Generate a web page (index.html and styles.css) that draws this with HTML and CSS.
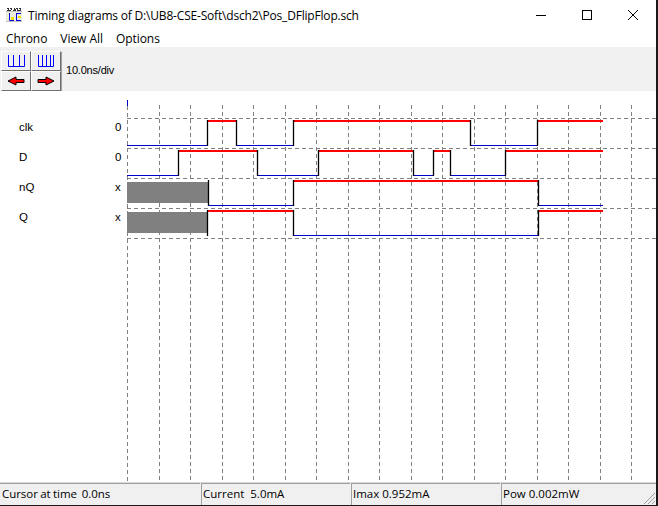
FILE: index.html
```html
<!DOCTYPE html>
<html lang="en">
<head>
    <meta charset="UTF-8">
    <title>Timing diagrams</title>
    <link rel="stylesheet" href="styles.css">
</head>
<body>
    <div class="window">
        <div class="title-bar">
            <svg class="app-icon" width="16" height="16" viewBox="0 0 16 16">
                <path d="M1 1.500h2M4 1.500h2M8 1.500h1M10 1.500h2M13 1.500h2M2 2.500h1M5 2.500h1M8 2.500h2M11 2.500h1M14 2.500h1M1 3.500h4M7 3.500h3M11 3.500h4" stroke="#333" fill="none"/>
                <rect x="0" y="4" width="16" height="11" fill="#ececd8"/>
                <path d="M0 4.500h16M0 14.500h16" stroke="#c0c0c0"/>
                <path d="M3.500 6v7.500H8M10 6.500h5M10 13.500h5M10.500 6v8" stroke="#0000e0" fill="none"/>
                <rect x="5" y="10" width="3" height="3" fill="#f0e000"/>
                <rect x="12" y="9" width="3" height="2" fill="#f0e000"/>
            </svg>
            <span class="title">Timing diagrams of D:\UB8-CSE-Soft\dsch2\Pos_DFlipFlop.sch</span>
            <div class="win-buttons">
                <svg width="12" height="12" viewBox="0 0 12 12"><path d="M1 6.500h10" stroke="#000"/></svg>
                <svg width="12" height="12" viewBox="0 0 12 12"><rect x="1.500" y="1.500" width="9" height="9" fill="none" stroke="#000"/></svg>
                <svg width="12" height="12" viewBox="0 0 12 12"><path d="M1 1l10 10M11 1L1 11" stroke="#000"/></svg>
            </div>
        </div>

        <div class="menu-bar">
            <span>Chrono</span>
            <span>View All</span>
            <span>Options</span>
        </div>

        <div class="tool-bar">
            <div class="tool-grid">
                <button class="tool-btn">
                    <svg width="18" height="14" viewBox="0 0 18 14"><path d="M1.500 1v11.500h16V1M6.500 1v11.500M12.500 1v11.500" stroke="#0000ff" fill="none"/></svg>
                </button>
                <button class="tool-btn">
                    <svg width="18" height="14" viewBox="0 0 18 14"><path d="M1.500 1v11.500h15V1M5.500 1v11.500M9.500 1v11.500M13.500 1v11.500" stroke="#0000ff" fill="none"/></svg>
                </button>
                <button class="tool-btn">
                    <svg width="18" height="12" viewBox="0 0 18 12"><path d="M1 6l8-4v2.500h8v3H9V10z" fill="#ff0000" stroke="#000"/></svg>
                </button>
                <button class="tool-btn">
                    <svg width="18" height="12" viewBox="0 0 18 12"><path d="M17 6L9 2v2.500H1v3h8V10z" fill="#ff0000" stroke="#000"/></svg>
                </button>
            </div>
            <span class="scale">10.0ns/div</span>
        </div>

        <div class="plot">
            <svg width="656" height="392" viewBox="0 91 656 392">
                <!-- grid -->
                <path class="grid" d="M127.500 106V481M159.500 105V481M190.500 105V481M222.500 105V481M253.500 105V481M285.500 105V481M316.500 105V481M348.500 105V481M379.500 105V481M411.500 105V481M442.500 105V481M474.500 105V481M505.500 105V481M537.500 105V481M568.500 105V481M600.500 105V481M631.500 105V481"/>
                <path class="grid" d="M127 118.500H656M127 148.500H656M127 178.500H656M127 208.500H656M127 238.500H656"/>
                <path class="low" d="M127.500 100V106"/>

                <!-- signal names and start values -->
                <text class="sig" x="19" y="131">clk</text>
                <text class="sig" x="19" y="161">D</text>
                <text class="sig" x="19" y="191">nQ</text>
                <text class="sig" x="19" y="221">Q</text>
                <text class="sig" x="115" y="131">0</text>
                <text class="sig" x="115" y="161">0</text>
                <text class="sig" x="115" y="191">x</text>
                <text class="sig" x="115" y="221">x</text>

                <!-- unknown state -->
                <rect class="unknown" x="127" y="182" width="81" height="21"/>
                <rect class="unknown" x="127" y="212" width="80" height="21"/>

                <!-- clk -->
                <path class="low" d="M127 145.500H207M236 145.500H293M470 145.500H537"/>
                <path class="high" d="M207 121H236M293 121H470M537 121H603"/>
                <path class="edge" d="M207.500 120V146M236.500 120V146M293.500 120V146M470.500 120V146M537.500 120V146"/>

                <!-- D -->
                <path class="low" d="M127 175.500H178M257 175.500H318M413 175.500H433M450 175.500H505"/>
                <path class="high" d="M178 151H257M318 151H413M433 151H450M505 151H603"/>
                <path class="edge" d="M178.500 150V176M257.500 150V176M318.500 150V176M413.500 150V176M433.500 150V176M450.500 150V176M505.500 150V176"/>

                <!-- nQ -->
                <path class="low" d="M208 205.500H293M538 205.500H603"/>
                <path class="high" d="M293 181H538"/>
                <path class="edge" d="M208.500 180V206M293.500 180V206M538.500 180V206"/>

                <!-- Q -->
                <path class="low" d="M294 235.500H538"/>
                <path class="high" d="M207 211H294M538 211H603"/>
                <path class="edge" d="M207.500 210V236M293.500 210V236M538.500 210V236"/>
            </svg>
        </div>

        <div class="status-bar">
            <div class="panel panel-cursor">Cursor at time&nbsp; 0.0ns</div>
            <div class="panel panel-current">Current&nbsp; 5.0mA</div>
            <div class="panel panel-imax">Imax 0.952mA</div>
            <div class="panel panel-pow">Pow 0.002mW</div>
            <svg class="grip" width="14" height="14" viewBox="0 0 14 14"><path d="M13 2L2 13M13 6L6 13M13 10l-3 3" stroke="#a0a0a0" fill="none"/></svg>
        </div>
    </div>
</body>
</html>
```

FILE: styles.css
```css
html, body {
    margin: 0;
    padding: 0;
    height: 100%;
    overflow: hidden;
    background-color: #fff;
}
.window {
    width: 656px;
    height: 505px;
    display: flex;
    flex-direction: column;
    border-right: 2px solid #1a1a1a;
    border-bottom: 1px solid #1a1a1a;
    font-family: "Open Sans", sans-serif;
    font-size: 12px;
    color: #000;
}
.title-bar {
    height: 30px;
    display: flex;
    align-items: center;
    padding-left: 6px;
    flex: none;
}
.app-icon {
    margin-right: 6px;
}
.title {
    letter-spacing: -0.19px;
}
.win-buttons {
    margin-left: auto;
    display: flex;
    gap: 34px;
    padding-right: 17px;
}
.menu-bar {
    height: 17px;
    display: flex;
    gap: 13px;
    padding-left: 6px;
    flex: none;
    line-height: 18px;
    letter-spacing: -0.05px;
}
.tool-bar {
    height: 44px;
    background-color: #f0f0f0;
    display: flex;
    align-items: center;
    flex: none;
}
.tool-grid {
    display: grid;
    grid-template-columns: 30px 30px;
    grid-template-rows: 20px 20px;
    margin-left: 1px;
    margin-top: 3px;
}
.tool-btn {
    padding: 0;
    background-color: #f0f0f0;
    border: 1px solid;
    border-color: #fff #707070 #707070 #fff;
    box-shadow: 1px 1px 0 #a0a0a0;
    display: flex;
    align-items: center;
    justify-content: center;
}
.scale {
    font-family: "Liberation Sans", Arial, sans-serif;
    font-size: 11px;
    letter-spacing: -0.2px;
    margin-left: 5px;
    margin-top: 2px;
}
.plot {
    flex: 1;
    background-color: #fff;
    min-height: 0;
}
.plot svg {
    display: block;
}
.grid {
    stroke: #808080;
    stroke-dasharray: 4 3;
    fill: none;
}
.low {
    stroke: #0000c8;
    fill: none;
}
.high {
    stroke: #ff0000;
    stroke-width: 2;
    fill: none;
}
.edge {
    stroke: #000;
    stroke-width: 1.3;
    fill: none;
}
.unknown {
    fill: #808080;
}
.sig {
    font-family: "Liberation Sans", Arial, sans-serif;
    font-size: 11.5px;
    fill: #000;
}
.status-bar {
    height: 22px;
    flex: none;
    background-color: #f0f0f0;
    display: flex;
    position: relative;
    border-top: 1px solid #d8d8d8;
    line-height: 20px;
    font-size: 11.5px;
}
.panel {
    border-left: 1px solid #a0a0a0;
    border-top: 1px solid #a0a0a0;
    padding-left: 1px;
    box-sizing: border-box;
}
.panel-cursor {
    width: 200px;
    border-left: none;
    padding-left: 2px;
    word-spacing: -0.5px;
    letter-spacing: -0.05px;
}
.panel-current {
    width: 149px;
    margin-left: 1px;
}
.panel-imax {
    width: 149px;
    margin-left: 1px;
}
.panel-pow {
    flex: 1;
    margin-left: 1px;
}
.grip {
    position: absolute;
    right: 0;
    bottom: 0;
}
```
